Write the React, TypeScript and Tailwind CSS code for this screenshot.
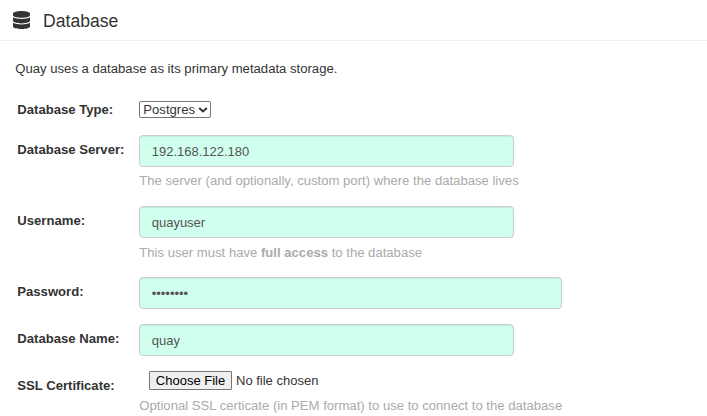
import type { ReactNode } from 'react';
import { FaDatabase } from 'react-icons/fa';

function Row({ label, className, children }: { label: string; className: string; children: ReactNode }) {
  return (
    <div className={`flex ${className}`}>
      <div className="w-[122px] shrink-0 pt-[6px] pl-[0.300px] font-bold">{label}</div>
      <div>{children}</div>
    </div>
  );
}

function Field({ value, type = 'text', width = 'w-[375px]' }: { value: string; type?: string; width?: string }) {
  return (
    <input
      type={type}
      defaultValue={value}
      className={`block h-8 ${width} rounded-[4px] border border-[#ccc] bg-[#d0ffee] px-[11.700px] text-[13px] text-[#555] shadow-[inset_0_1px_1px_rgba(0,0,0,0.075)] outline-none`}
    />
  );
}

function Hint({ className = 'mt-[5px]', children }: { className?: string; children: ReactNode }) {
  return <div className={`${className} pl-[0.300px] whitespace-nowrap text-[#aaa]`}>{children}</div>;
}

export default function App() {
  return (
    <main className="h-[416px] w-[707px] overflow-hidden bg-white font-['Liberation_Sans',Arial,sans-serif] text-[13.120px] leading-[18px] text-[#333]">
      <header className="flex h-[41px] items-center border-b border-[#eee] pl-[12.500px]">
        <FaDatabase className="h-[18px] w-[17px]" preserveAspectRatio="none" />
        <h1 className="mt-[2px] ml-[13.500px] text-[17.600px] leading-5">Database</h1>
      </header>
      <p className="h-[54px] pt-[19px] pl-[15.300px]">Quay uses a database as its primary metadata storage.</p>
      <form className="pl-[17px]">
        <Row label="Database Type:" className="h-10">
          <div className="mt-[6px] grid h-[17px] w-[72px] items-center">
            <select className="col-start-1 row-start-1 h-[17px] w-[72px] appearance-none rounded-[2px] border border-[#767676] bg-white pl-[3.300px] text-[13.120px] leading-[15px] text-[#333]">
              <option>Postgres</option>
            </select>
            <svg viewBox="0 0 10 6" className="pointer-events-none col-start-1 row-start-1 mr-[3px] h-[6px] w-[10px] justify-self-end" fill="none" stroke="#333" strokeWidth="2">
              <path d="M1.200 1 5 4.500 8.800 1" />
            </svg>
          </div>
        </Row>
        <Row label="Database Server:" className="h-[71px]">
          <Field value="192.168.122.180" />
          <Hint>The server (and optionally, custom port) where the database lives</Hint>
        </Row>
        <Row label="Username:" className="h-[71px]">
          <Field value="quayuser" />
          <Hint className="mt-[6px]">This user must have <b>full access</b> to the database</Hint>
        </Row>
        <Row label="Password:" className="h-[47px]">
          <Field type="password" value="password" width="w-[423px]" />
        </Row>
        <Row label="Database Name:" className="h-[47px]">
          <Field value="quay" />
        </Row>
        <Row label="SSL Certificate:" className="h-[45px]">
          <div className="flex h-[19px] items-center pl-[10px] text-[13px]">
            <button type="button" className="h-[19px] w-[83px] rounded-[1px] border border-[#767676] bg-[#efefef] leading-[17px] text-black">Choose File</button>
            <span className="ml-1">No file chosen</span>
          </div>
          <Hint className="mt-[7px]">Optional SSL certicate (in PEM format) to use to connect to the database</Hint>
        </Row>
      </form>
    </main>
  );
}
